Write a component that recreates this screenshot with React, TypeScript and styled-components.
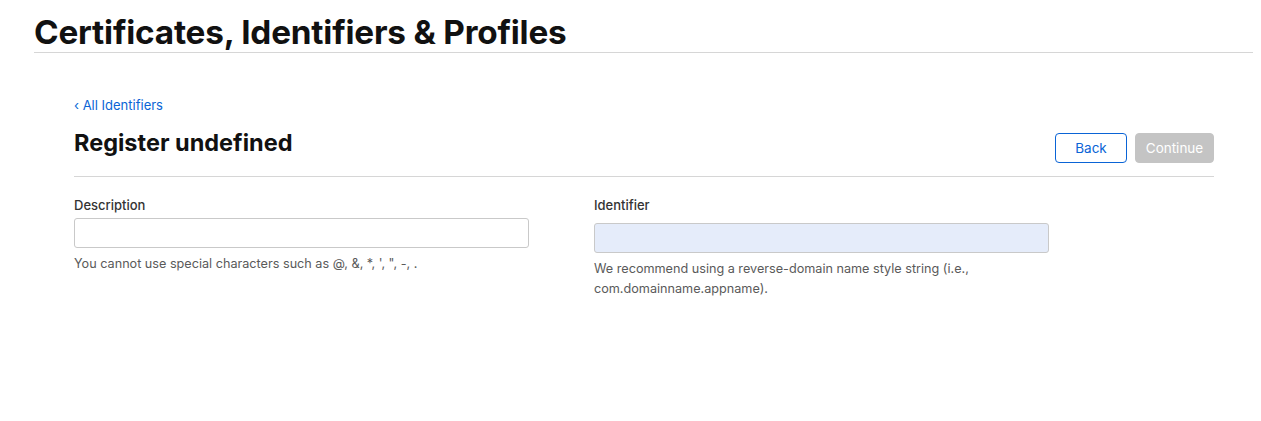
import React from "react";
import styled, { createGlobalStyle } from "styled-components";

const Global = createGlobalStyle`
  html, body { margin: 0; padding: 0; background: #fff; }
  body { font-family: Inter, "Noto Sans", sans-serif; color: #1d1d1f; -webkit-font-smoothing: antialiased; }
  * { box-sizing: border-box; }
`;

const Page = styled.div`
  width: 1261px;
  height: 421px;
  padding: 15px 8px 0 34px;
`;

const Header = styled.header`
  border-bottom: 1px solid #d6d6d6;
  padding-bottom: 2px;
`;

const Title = styled.h1`
  margin: 0;
  font-size: 33.3px;
  line-height: 35px;
  font-weight: 700;
  letter-spacing: -0.2px;
  color: #111;
`;

const Main = styled.main`
  padding: 41px 39px 0 40px;
`;

const BackLink = styled.a`
  display: inline-flex;
  align-items: center;
  gap: 4px;
  font-size: 13px;
  line-height: 18px;
  color: #0a64d6;
  text-decoration: none;
`;

const TopRow = styled.div`
  display: flex;
  align-items: center;
  justify-content: space-between;
  margin-top: 15px;
  padding-bottom: 13px;
  border-bottom: 1px solid #d6d6d6;
`;

const Heading = styled.h2`
  margin: 0;
  font-size: 23.5px;
  line-height: 30px;
  font-weight: 700;
  color: #111;
  margin-top: -6px;
`;

const Actions = styled.div`
  display: flex;
  gap: 8px;
  padding-top: 4px;
`;

const Button = styled.button<{ $primary?: boolean }>`
  height: 30px;
  width: ${(p) => (p.$primary ? "79px" : "72px")};
  padding: 0;
  border-radius: 4px;
  font-family: Inter, sans-serif;
  font-size: 13.5px;
  border: 1px solid ${(p) => (p.$primary ? "#c4c4c4" : "#0a64d6")};
  background: ${(p) => (p.$primary ? "#c4c4c4" : "#fff")};
  color: ${(p) => (p.$primary ? "#fff" : "#0a64d6")};
`;

const Fields = styled.div`
  display: grid;
  grid-template-columns: 455px 455px;
  column-gap: 65px;
  margin-top: 19px;
`;

const Field = styled.div`
  display: flex;
  flex-direction: column;
`;

const Label = styled.label`
  font-size: 13px;
  line-height: 18px;
  font-weight: 500;
  color: #333;
`;

const Input = styled.div<{ $filled?: boolean; $gap: number }>`
  height: 30px;
  margin-top: ${(p) => p.$gap}px;
  border: 1px solid #c9c9c9;
  border-radius: 3px;
  background: ${(p) => (p.$filled ? "#e5ecfa" : "#fff")};
`;

const Help = styled.p`
  margin: 6px 0 0;
  font-size: 12.65px;
  line-height: 20px;
  color: #5a5a5a;
`;

export default function App() {
  return (
    <>
      <Global />
      <Page>
        <Header>
          <Title>Certificates, Identifiers &amp; Profiles</Title>
        </Header>
        <Main>
          <BackLink href="#">‹ All Identifiers</BackLink>
          <TopRow>
            <Heading>Register undefined</Heading>
            <Actions>
              <Button>Back</Button>
              <Button $primary>Continue</Button>
            </Actions>
          </TopRow>
          <Fields>
            <Field>
              <Label>Description</Label>
              <Input $gap={4} />
              <Help>You cannot use special characters such as @, &amp;, *, ', ", -, .</Help>
            </Field>
            <Field>
              <Label>Identifier</Label>
              <Input $gap={9} $filled />
              <Help>
                We recommend using a reverse-domain name style string (i.e.,
                <br />
                com.domainname.appname).
              </Help>
            </Field>
          </Fields>
        </Main>
      </Page>
    </>
  );
}
